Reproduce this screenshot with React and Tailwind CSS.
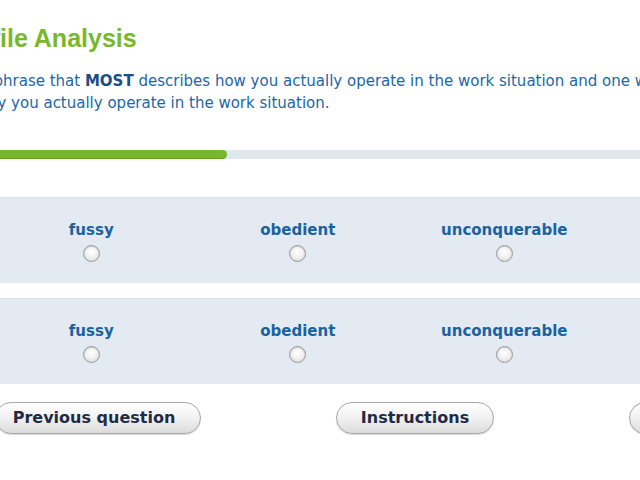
export default function App() {
  const words = ["fussy", "obedient", "unconquerable", "determined"];
  const Radio = () => (
    <span className="block w-[17px] h-[17px] rounded-full border border-[#9a9a9a] bg-[radial-gradient(circle_at_50%_40%,#ffffff_0%,#f2f2f2_45%,#cfcfcf_100%)] shadow-[inset_0_1px_1px_rgba(0,0,0,0.15)]"></span>
  );
  const Row = () => (
    <div className="h-[86px] bg-[#e3eaf2] border-t border-[#d9e1ea] flex ml-[-12px] w-[860px]">
      {words.map((w) => (
        <div key={w} className="w-[206.5px] shrink-0 flex flex-col items-center pt-[23px]">
          <span className="text-[15px] font-bold text-[#1a62a0] leading-[18px]">{w}</span>
          <span className="mt-[6px]"><Radio /></span>
        </div>
      ))}
    </div>
  );
  const Btn = ({ children, className }) => (
    <div className={"h-[32px] rounded-full border border-[#a8a8a8] bg-[linear-gradient(#ffffff,#f1f1f1_50%,#dcdcdc)] shadow-[0_1px_1px_rgba(0,0,0,0.15)] flex items-center justify-center text-[16px] font-bold text-[#1f2b47] shrink-0 " + className}>
      {children}
    </div>
  );
  return (
    <div className="w-[640px] h-[480px] overflow-hidden bg-white relative font-['DejaVu_Sans',Verdana,sans-serif]">
      <div className="pt-[24px] ml-[-50px] whitespace-nowrap text-[25px] leading-[28px] font-bold text-[#78b929] font-['Liberation_Sans',Arial,sans-serif]">
        Profile Analysis
      </div>
      <div className="mt-[18px] text-[15px] leading-[22px] text-[#2266a6] whitespace-nowrap">
        <div className="ml-[-6.5px]">
          phrase that <b className="text-[#1a4f86]">MOST</b> describes how you actually operate in the work situation and one which
        </div>
        <div className="ml-[-24px]">way you actually operate in the work situation.</div>
      </div>
      <div className="mt-[36px] h-[9px] bg-[#dfe7ef] flex">
        <div className="w-[227px] h-[9px] rounded-r-full bg-[#77b82a] border-b border-[#62a21d]"></div>
      </div>
      <div className="mt-[38px]">
        <Row />
      </div>
      <div className="mt-[15px]">
        <Row />
      </div>
      <div className="mt-[18px] flex">
        <Btn className="ml-[-5px] w-[206px] pr-[8px]">Previous question</Btn>
        <Btn className="ml-[135px] w-[158px]">Instructions</Btn>
        <Btn className="ml-[135px] w-[158px]">Next question</Btn>
      </div>
    </div>
  );
}
